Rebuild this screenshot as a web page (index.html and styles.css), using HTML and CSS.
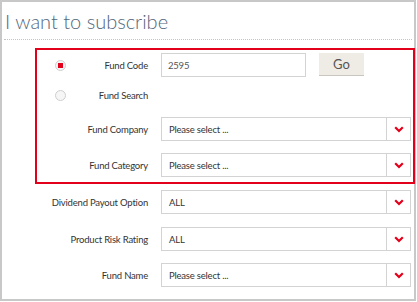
FILE: index.html
```html
<!DOCTYPE html>
<html lang="en">
<head>
    <meta charset="UTF-8">
    <title>I want to subscribe</title>
    <link rel="stylesheet" href="styles.css">
</head>
<body>
<div class="frame">
    <h1 class="title">I want to subscribe</h1>
    <div class="highlight">
        <div class="row row-code">
            <label class="label"><span class="radio checked"></span><span>Fund Code</span></label>
            <div class="control-pair">
                <input class="text-input" type="text" value="2595">
                <button class="btn-go">Go</button>
            </div>
        </div>
        <div class="row row-search">
            <label class="label"><span class="radio"></span><span>Fund Search</span></label>
        </div>
        <div class="row row-company">
            <label class="label">Fund Company</label>
            <div class="select"><span class="select-text">Please select ...</span><span class="select-arrow"><svg width="10" height="7" viewBox="0 0 10 7"><path d="M1.2 1.2 5 5 8.8 1.2" fill="none" stroke="#e2001a" stroke-width="2.2"/></svg></span></div>
        </div>
        <div class="row row-category">
            <label class="label">Fund Category</label>
            <div class="select"><span class="select-text">Please select ...</span><span class="select-arrow"><svg width="10" height="7" viewBox="0 0 10 7"><path d="M1.2 1.2 5 5 8.8 1.2" fill="none" stroke="#e2001a" stroke-width="2.2"/></svg></span></div>
        </div>
    </div>
    <div class="more">
        <div class="row row-dividend">
            <label class="label">Dividend Payout Option</label>
            <div class="select"><span class="select-text">ALL</span><span class="select-arrow"><svg width="10" height="7" viewBox="0 0 10 7"><path d="M1.2 1.2 5 5 8.8 1.2" fill="none" stroke="#e2001a" stroke-width="2.2"/></svg></span></div>
        </div>
        <div class="row row-risk">
            <label class="label">Product Risk Rating</label>
            <div class="select"><span class="select-text">ALL</span><span class="select-arrow"><svg width="10" height="7" viewBox="0 0 10 7"><path d="M1.2 1.2 5 5 8.8 1.2" fill="none" stroke="#e2001a" stroke-width="2.2"/></svg></span></div>
        </div>
        <div class="row row-name">
            <label class="label">Fund Name</label>
            <div class="select"><span class="select-text">Please select ...</span><span class="select-arrow"><svg width="10" height="7" viewBox="0 0 10 7"><path d="M1.2 1.2 5 5 8.8 1.2" fill="none" stroke="#e2001a" stroke-width="2.2"/></svg></span></div>
        </div>
    </div>
</div>
</body>
</html>
```

FILE: styles.css
```css
*{
    margin: 0;
    padding: 0;
    box-sizing: border-box;
}
body{
    background: #fff;
    font-family: Lato, "Open Sans", sans-serif;
    color: #333;
}
.frame{
    width: 416px;
    height: 301px;
    border: 2px solid #c8c8c8;
    background: #fff;
}
.title{
    margin: 0 2px;
    padding: 5px 0 0 1px;
    height: 38px;
    font-size: 20px;
    font-weight: 300;
    line-height: 28px;
    color: #52667a;
    border-bottom: 1px dotted #c4c4c4;
}
.highlight{
    margin: 8px -1px 0 33px;
    padding: 3px 0 5px 0;
    border: 2px solid #e2001a;
}
.more{
    margin-left: 35px;
    padding-top: 6px;
}
.row{
    display: flex;
    align-items: center;
    height: 24px;
}
.row-search{
    margin-top: 6px;
}
.row-company{
    margin-top: 10px;
}
.row-category{
    margin-top: 12px;
}
.row-risk{
    margin-top: 13px;
}
.row-name{
    margin-top: 12px;
}
.label{
    width: 111px;
    margin-right: 13px;
    display: flex;
    justify-content: flex-end;
    align-items: center;
    font-size: 9.5px;
    letter-spacing: -0.2px;
    color: #333;
    white-space: nowrap;
}
.row-code .label, .row-search .label{
    justify-content: space-between;
}
.radio{
    width: 11px;
    height: 11px;
    margin-left: 18px;
    border: 1px solid #cfcfcf;
    border-radius: 50%;
    background: #f6f6f6;
    display: flex;
    align-items: center;
    justify-content: center;
}
.radio.checked::after{
    content: "";
    width: 5px;
    height: 5px;
    background: #e2001a;
}
.control-pair{
    display: flex;
    align-items: center;
    height: 24px;
}
.text-input{
    width: 145px;
    height: 24px;
    border: 1px solid #d3d3d3;
    padding: 0 6px;
    font-family: inherit;
    font-size: 9.5px;
    letter-spacing: -0.2px;
    color: #555;
    outline: none;
}
.btn-go{
    width: 45px;
    height: 23px;
    margin-left: 13px;
    margin-top: -1px;
    border: none;
    border-bottom: 1px solid #c9c6c0;
    background: #efebe5;
    font-family: inherit;
    font-size: 13px;
    color: #555;
}
.select{
    width: 250px;
    height: 24px;
    border: 1px solid #d3d3d3;
    display: flex;
    align-items: center;
}
.select-text{
    flex: 1;
    padding-left: 7px;
    font-size: 9.5px;
    letter-spacing: -0.2px;
    color: #333;
}
.select-arrow{
    width: 24px;
    height: 100%;
    border-left: 1px solid #d3d3d3;
    display: flex;
    align-items: center;
    justify-content: center;
}
```
